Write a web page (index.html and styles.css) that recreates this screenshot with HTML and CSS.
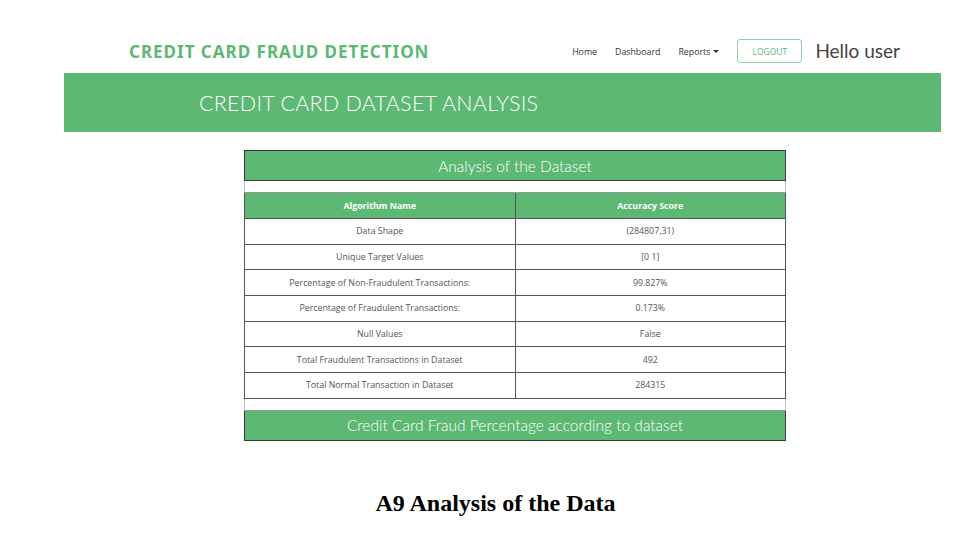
FILE: index.html
```html
<!DOCTYPE html>
<html>
<head>
<meta charset="utf-8">
<link rel="stylesheet" href="styles.css">
</head>
<body>
<header class="topbar">
  <div class="brand">CREDIT CARD FRAUD DETECTION</div>
  <nav class="nav">
    <a class="nav-link">Home</a>
    <a class="nav-link">Dashboard</a>
    <a class="nav-link">Reports<span class="caret"></span></a>
    <a class="logout">LOGOUT</a>
    <span class="hello">Hello user</span>
  </nav>
</header>
<section class="banner">
  <h1 class="banner-title">CREDIT CARD DATASET ANALYSIS</h1>
</section>
<main class="content">
  <table class="analysis">
    <tr><th colspan="2" class="title-cell">Analysis of the Dataset</th></tr>
    <tr class="gap"><td colspan="2"></td></tr>
    <tr class="head"><th>Algorithm Name</th><th>Accuracy Score</th></tr>
    <tr><td>Data Shape</td><td>(284807,31)</td></tr>
    <tr><td>Unique Target Values</td><td>[0 1]</td></tr>
    <tr><td>Percentage of Non-Fraudulent Transactions:</td><td>99.827%</td></tr>
    <tr><td>Percentage of Fraudulent Transactions:</td><td>0.173%</td></tr>
    <tr><td>Null Values</td><td>False</td></tr>
    <tr><td>Total Fraudulent Transactions in Dataset</td><td>492</td></tr>
    <tr><td>Total Normal Transaction in Dataset</td><td>284315</td></tr>
    <tr class="gap"><td colspan="2"></td></tr>
    <tr><th colspan="2" class="title-cell">Credit Card Fraud Percentage according to dataset</th></tr>
  </table>
</main>
<p class="caption">A9 Analysis of the Data</p>
</body>
</html>
```

FILE: styles.css
```css
html, body {
  margin: 0;
  padding: 0;
  background: #ffffff;
}
body {
  width: 975px;
  height: 550px;
  overflow: hidden;
  font-family: "Open Sans", sans-serif;
}
.topbar {
  display: flex;
  align-items: center;
  height: 73px;
  padding-top: 29px;
  padding-left: 129px;
  padding-right: 75px;
  box-sizing: border-box;
  justify-content: space-between;
}
.brand {
  font-family: "Noto Sans", sans-serif;
  font-weight: 700;
  font-size: 17px;
  color: #5cb874;
  letter-spacing: 1px;
}
.nav {
  display: flex;
  align-items: center;
}
.nav-link {
  font-size: 8.8px;
  color: #333;
  margin-right: 18px;
  padding-top: 1px;
}
.caret {
  display: inline-block;
  width: 0;
  height: 0;
  border-left: 3px solid transparent;
  border-right: 3px solid transparent;
  border-top: 3px solid #333;
  margin-left: 3px;
  vertical-align: 2px;
}
.logout {
  display: flex;
  align-items: center;
  justify-content: center;
  width: 65px;
  height: 24px;
  box-sizing: border-box;
  border: 1.5px solid #8fd3a0;
  border-radius: 3px;
  color: #5cb874;
  font-size: 8.5px;
  margin-right: 13px;
}
.hello {
  font-family: "Lato", sans-serif;
  font-size: 19px;
  color: #444;
  padding-bottom: 2px;
}
.banner {
  margin-left: 64px;
  width: 877px;
  height: 59px;
  background: #5db873;
  display: flex;
  align-items: center;
}
.banner-title {
  margin: 0 0 0 135px;
  font-family: "Lato", sans-serif;
  font-weight: 300;
  font-size: 21.5px;
  letter-spacing: 0.25px;
  color: #ffffff;
  padding-top: 1px;
}
.content {
  padding-top: 18px;
  padding-left: 244px;
}
.analysis {
  width: 542px;
  border-collapse: collapse;
  border: 1px solid #3a3a3a;
  font-size: 8.8px;
  color: #555;
}
.analysis td {
  border: 1px solid #555;
  text-align: center;
  height: 24.7px;
  padding: 0;
  width: 50%;
}
.analysis .title-cell {
  background: #5db873;
  color: #fff;
  font-family: "Lato", sans-serif;
  font-weight: 300;
  font-size: 15.5px;
  height: 29px;
  padding: 0;
  border: 1px solid #3a3a3a;
}
.analysis .gap td {
  height: 11px;
  border-left: 1px solid #bbb;
  border-right: 1px solid #bbb;
  border-top: 1px solid #999;
  border-bottom: 1px solid #999;
}
.analysis .head th {
  background: #5db873;
  color: #fff;
  font-weight: 700;
  font-size: 8.8px;
  height: 25px;
  padding: 0;
  border: 1px solid #555;
}
.caption {
  margin: 49px 0 0 0;
  text-align: center;
  font-family: "Liberation Serif", serif;
  font-weight: 700;
  font-size: 24px;
  color: #000;
  padding-left: 16px;
}
```
